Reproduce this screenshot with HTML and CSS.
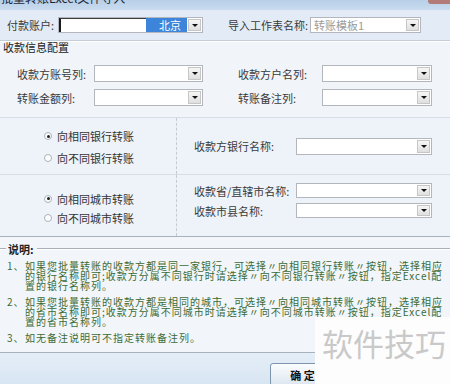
FILE: index.html
```html
<!DOCTYPE html>
<html lang="zh-CN">
<head>
    <meta charset="UTF-8">
    <title>批量转账导入配置</title>
    <link rel="stylesheet" href="styles.css">
</head>
<body>
    <div class="dialog">
        <div class="titlebar">
            <span class="title">批量转账Excel文件导入</span>
            <span class="close"></span>
        </div>

        <!-- 付款账户 / 工作表 -->
        <div class="toprow">
            <span class="lbl w-pay">付款账户:</span>
            <div class="combo combo-pay">
                <span class="edit"></span>
                <span class="sel">北京</span>
                <span class="btn"></span>
            </div>
            <span class="lbl w-sheet">导入工作表名称:</span>
            <div class="combo combo-sheet">
                <span class="val">转账模板1</span>
                <span class="btn"></span>
            </div>
        </div>

        <div class="legend">收款信息配置</div>
        <div class="cfg">
            <div class="cfg-row">
                <span class="lbl w-c1">收款方账号列:</span>
                <div class="combo combo-c1"><span class="val"></span><span class="btn"></span></div>
                <span class="lbl w-c2">收款方户名列:</span>
                <div class="combo combo-c2"><span class="val"></span><span class="btn"></span></div>
            </div>
            <div class="cfg-row">
                <span class="lbl w-c1">转账金额列:</span>
                <div class="combo combo-c1"><span class="val"></span><span class="btn"></span></div>
                <span class="lbl w-c2">转账备注列:</span>
                <div class="combo combo-c2"><span class="val"></span><span class="btn"></span></div>
            </div>
        </div>

        <!-- 银行 -->
        <div class="sec sec-bank">
            <div class="radios">
                <div class="radio-row"><span class="radio checked"></span>向相同银行转账</div>
                <div class="radio-row"><span class="radio"></span>向不同银行转账</div>
            </div>
            <div class="side">
                <div class="side-row">
                    <span class="lbl w-side">收款方银行名称:</span>
                    <div class="combo combo-side"><span class="val"></span><span class="btn"></span></div>
                </div>
            </div>
        </div>

        <!-- 城市 -->
        <div class="sec sec-city">
            <div class="radios">
                <div class="radio-row"><span class="radio checked"></span>向相同城市转账</div>
                <div class="radio-row"><span class="radio"></span>向不同城市转账</div>
            </div>
            <div class="side">
                <div class="side-row">
                    <span class="lbl w-side">收款省/直辖市名称:</span>
                    <div class="combo combo-side"><span class="val"></span><span class="btn"></span></div>
                </div>
                <div class="side-row">
                    <span class="lbl w-side">收款市县名称:</span>
                    <div class="combo combo-side"><span class="val"></span><span class="btn"></span></div>
                </div>
            </div>
        </div>

        <div class="notes">
            <div class="notes-legend"><span class="rule short"></span><span class="notes-title">说明:</span><span class="rule"></span></div>
            <div class="note">
                <span class="num">1、</span>
                <span class="txt">如果您批量转账的收款方都是同一家银行，可选择〃向相同银行转账〃按钮，选择相应<br>的银行名称即可;收款方分属不同银行时请选择〃向不同银行转账〃按钮，指定Excel配<br>置的银行名称列。</span>
            </div>
            <div class="note">
                <span class="num">2、</span>
                <span class="txt">如果您批量转账的收款方都是相同的城市，可选择〃向相同城市转账〃按钮，选择相应<br>的省市名称即可;收款方分属不同城市时请选择〃向不同城市转账〃按钮，指定Excel配<br>置的省市名称列。</span>
            </div>
            <div class="note">
                <span class="num">3、</span>
                <span class="txt">如无备注说明可不指定转账备注列。</span>
            </div>
        </div>

        <div class="footer">
            <button class="ok">确 定</button>
        </div>

        <div class="watermark">软件技巧</div>
    </div>
</body>
</html>
```

FILE: styles.css
```css
* {
    box-sizing: border-box;
}
body {
    margin: 0;
    width: 450px;
    height: 384px;
    overflow: hidden;
    font-family: "Noto Sans CJK SC", "Noto Sans", sans-serif;
    font-size: 11px;
    color: #3a3a3a;
    background: #f1f5fa;
}
.dialog {
    position: relative;
    width: 450px;
    height: 384px;
    display: flex;
    flex-direction: column;
}
.titlebar {
    height: 10px;
    flex: none;
    display: flex;
    justify-content: space-between;
    overflow: hidden;
    background: linear-gradient(#b7cfe8, #cadcef);
}
.title {
    font-size: 12px;
    line-height: 12px;
    margin-top: -8px;
    padding-left: 1px;
    color: #1c2633;
}
.close {
    width: 22px;
    height: 4px;
    background: #b27b78;
    border-radius: 0 0 0 3px;
}
.lbl {
    white-space: nowrap;
    line-height: 12px;
}

/* combo box */
.combo {
    display: flex;
    height: 17px;
    flex: none;
    border: 1px solid #b3b7bd;
    background: #fff;
}
.combo .val {
    flex: 1;
    padding-left: 3px;
    line-height: 15px;
    color: #9a9a9a;
    white-space: nowrap;
}
.combo .btn {
    width: 13px;
    margin: 1px;
    border: 1px solid #c6c6c6;
    background: linear-gradient(#f6f6f6, #dfdfdf);
    display: flex;
    align-items: center;
    justify-content: center;
}
.combo .btn::after {
    content: "";
    border-left: 3px solid transparent;
    border-right: 3px solid transparent;
    border-top: 3px solid #111;
}

.toprow {
    height: 31px;
    flex: none;
    display: flex;
    align-items: center;
    padding-left: 7px;
    background: #e3ecf6;
    border-bottom: 1px solid #c5ced8;
}
.w-pay {
    width: 51px;
}
.combo-pay {
    width: 145px;
    height: 16px;
    margin-right: 25px;
}
.combo-pay .edit {
    width: 88px;
    border-left: 2px solid #1b1b1b;
    border-top: 1px solid #3c3c3c;
}
.combo-pay .sel {
    width: 41px;
    background: #3d85da;
    color: #fff;
    text-align: right;
    padding-right: 6px;
    line-height: 14px;
}
.w-sheet {
    width: 82px;
}
.combo-sheet {
    width: 111px;
    height: 16px;
}

.legend {
    flex: none;
    padding-left: 3px;
    line-height: 10px;
    color: #222;
    border-top: 1px solid #fff;
}
.cfg {
    flex: none;
    padding: 13px 0 11px 17px;
}
.cfg-row {
    display: flex;
    align-items: center;
}
.cfg-row + .cfg-row {
    margin-top: 7px;
}
.w-c1 {
    width: 77px;
}
.combo-c1 {
    width: 109px;
}
.w-c2 {
    width: 84px;
    margin-left: 35px;
}
.combo-c2 {
    width: 110px;
}

/* radio sections */
.sec {
    flex: none;
    display: flex;
    border-top: 1px solid #d6dde5;
    background: #eef3f9;
}
.sec-bank {
    height: 57px;
}
.sec-city {
    height: 62px;
}
.radios {
    width: 177px;
    padding-left: 44px;
    border-right: 1px dashed #c3cad2;
}
.sec-bank .radios {
    padding-top: 7px;
}
.sec-city .radios {
    padding-top: 14px;
}
.radio-row {
    display: flex;
    align-items: center;
    color: #333;
    white-space: nowrap;
}
.sec-bank .radio-row {
    height: 22px;
}
.sec-city .radio-row {
    height: 19px;
}
.radio {
    width: 8px;
    height: 8px;
    margin-right: 5px;
    border: 1px solid #a9b0b8;
    border-radius: 50%;
    background: #fff;
    display: flex;
    align-items: center;
    justify-content: center;
}
.radio.checked::after {
    content: "";
    width: 3px;
    height: 3px;
    border-radius: 50%;
    background: #222;
}
.side {
    flex: 1;
    padding-left: 17px;
    display: flex;
    flex-direction: column;
}
.sec-bank .side {
    justify-content: center;
}
.sec-city .side {
    padding-top: 8px;
}
.side-row {
    display: flex;
    align-items: center;
}
.sec-city .side-row + .side-row {
    margin-top: 5px;
}
.sec-city .combo-side {
    height: 15px;
}
.w-side {
    width: 102px;
}
.combo-side {
    width: 136px;
    height: 17px;
}

/* 说明 */
.notes {
    flex: 1;
    border-top: 1px solid #a9b2bc;
    padding-top: 6px;
    background: #f2f6fa;
}
.notes-legend {
    display: flex;
    align-items: center;
    height: 12px;
}
.rule {
    flex: 1;
    height: 2px;
    border-top: 1px solid #a8b0b8;
    border-bottom: 1px solid #fff;
}
.rule.short {
    flex: none;
    width: 6px;
}
.notes-title {
    padding: 0 3px 0 2px;
    color: #222;
    font-weight: bold;
}
.note {
    display: flex;
    margin-top: 6px;
    padding-left: 7px;
    color: #3b6b37;
    font-size: 10px;
    line-height: 10px;
    white-space: nowrap;
}
.note:first-of-type {
    margin-top: 7px;
}
.num {
    width: 18px;
    letter-spacing: 1px;
}
.txt {
    letter-spacing: 1px;
}

.footer {
    height: 32px;
    flex: none;
    border-top: 1px solid #a9b2bc;
    background: linear-gradient(#e4eef8, #d8e5f2);
    padding: 10px 0 0 270px;
}
.ok {
    width: 75px;
    height: 23px;
    border: 1px solid #7d94ad;
    border-radius: 3px;
    background: linear-gradient(#fbfdff, #dde6ef);
    font-family: inherit;
    font-size: 11px;
    font-weight: bold;
    color: #111;
    padding: 0 10px 0 0;
}

.watermark {
    position: absolute;
    left: 315px;
    top: 317px;
    right: 0;
    bottom: 0;
    background: #fdfdfd;
    color: #c9c9c9;
    font-size: 31px;
    line-height: 50px;
    padding: 1px 0 0 7px;
    white-space: nowrap;
}
```
